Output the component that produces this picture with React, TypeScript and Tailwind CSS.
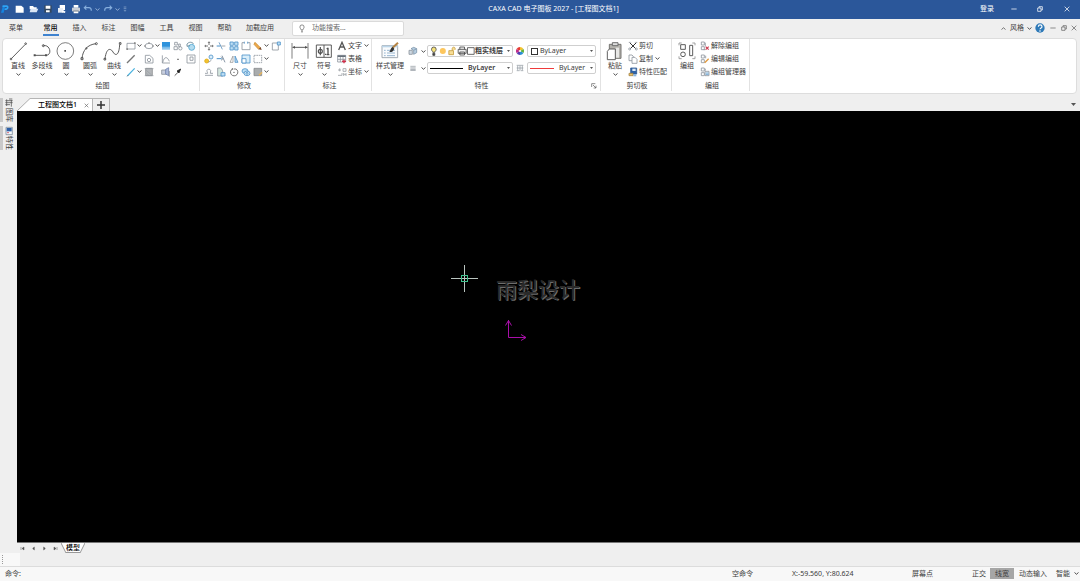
import type { ReactNode } from "react";

const BLUE = "#4a90c8";

function Chevron({ up = false, className = "" }: { up?: boolean; className?: string }) {
  return (
    <svg viewBox="0 0 10 6" className={`h-[3px] w-[5px] shrink-0 ${className}`} fill="none" stroke="currentColor" strokeWidth="1.8" aria-hidden="true">
      <path d={up ? "M1 5L5 1.5L9 5" : "M1 1L5 4.5L9 1"} />
    </svg>
  );
}

function Ico({ children }: { children: ReactNode }) {
  return (
    <svg viewBox="0 0 30 30" className="h-[10px] w-[10px] shrink-0" fill="none" stroke="#8a929a" strokeWidth="2.4" aria-hidden="true">
      {children}
    </svg>
  );
}

function Tool({ name, menu = false, children }: { name: string; menu?: boolean; children: ReactNode }) {
  return (
    <button type="button" aria-label={name} className="flex h-[13px] items-center gap-px hover:bg-sky-50">
      <Ico>{children}</Ico>
      {menu && <Chevron />}
    </button>
  );
}

function BigTool({ label, menu = true, wide = false, children }: { label: string; menu?: boolean; wide?: boolean; children: ReactNode }) {
  return (
    <button type="button" className={`flex flex-col items-center pt-[2px] hover:bg-sky-50 ${wide ? "w-[33px]" : "w-[24px]"}`}>
      <svg viewBox="0 0 72 60" className="h-[20px] w-[24px]" fill="none" stroke="#505050" strokeWidth="2.8" aria-hidden="true">
        {children}
      </svg>
      <span className="h-[10px] whitespace-nowrap leading-[10px]">{label}</span>
      {menu && <Chevron className="mt-[2px]" />}
    </button>
  );
}

function TextTool({ label, menu = false, children }: { label: string; menu?: boolean; children: ReactNode }) {
  return (
    <button type="button" className="flex h-[13px] items-center gap-px whitespace-nowrap leading-[13px] hover:bg-sky-50">
      <Ico>{children}</Ico>
      <span>{label}</span>
      {menu && <Chevron className="ml-px" />}
    </button>
  );
}

function Group({ title, launcher = false, className = "", children }: { title: string; launcher?: boolean; className?: string; children: ReactNode }) {
  return (
    <section aria-label={title} className="flex shrink-0 flex-col">
      <div className={`flex h-[52px] flex-col border-r border-[#e2e2e2] ${className}`}>
        <div className="flex flex-1">{children}</div>
        <div className="flex h-[10px] items-center">
          <span className="flex-1 text-center leading-[10px]">{title}</span>
          {launcher && (
            <button type="button" aria-label="特性设置" className="mr-[3px]">
              <svg viewBox="0 0 18 18" className="h-[6px] w-[6px]" fill="none" stroke="#555" strokeWidth="2">
                <path d="M2 12V2h11M6 6l9 9M15 8v7H8" />
              </svg>
            </button>
          )}
        </div>
      </div>
    </section>
  );
}

function Combo({ label, value, options, className = "", selectClass = "", children }: { label: string; value: string; options: string[]; className?: string; selectClass?: string; children: ReactNode }) {
  return (
    <label className={`flex h-[12px] items-center rounded-[2px] border border-[#cfcfcf] bg-white pl-[2px] pr-[2px] ${className}`}>
      {children}
      <select aria-label={label} defaultValue={value} className={`min-w-0 flex-1 appearance-none bg-transparent leading-[10px] outline-none ${selectClass}`}>
        {options.map((o) => (
          <option key={o}>{o}</option>
        ))}
      </select>
      <svg viewBox="0 0 9 6" className="h-[2px] w-[3px] shrink-0" fill="#555" aria-hidden="true">
        <path d="M0 0h9L4.500 6z" />
      </svg>
    </label>
  );
}

function TitleBar() {
  const quick: { name: string; art: ReactNode }[] = [
    { name: "新建", art: <path d="M2 5h17l7 6v15H2z" fill="#fff" /> },
    { name: "打开", art: <><path d="M2 6h10l3 4h8v6H2z" fill="#fff" /><path d="M5 14h23l-5 11H2z" fill="#dbe6f5" /></> },
    { name: "保存", art: <><path d="M4 4h22v22H4z" fill="#33475f" /><path d="M8 5h14v9H8zM9 19h11v6H9z" fill="#fff" /></> },
    { name: "另存为", art: <><path d="M8 3h16v15H8z" fill="#fff" /><path d="M3 12h15v14H3z" fill="#e8eef7" /><path d="M14 25l4-7 8 5-3 4z" fill="#fff" /></> },
    { name: "打印", art: <><path d="M8 3h14v8H8zM8 19h14v9H8z" fill="#fff" /><path d="M3 11h24v11H3z" fill="#c9ced6" /><path d="M7 20h16v2H7z" fill="#4c5868" /></> },
  ];
  return (
    <header className="flex h-[19px] shrink-0 items-center bg-[#2b579a] pb-px text-white">
      <svg viewBox="0 0 30 30" className="h-[10px] w-[10px] shrink-0" aria-label="CAXA">
        <path d="M3 26L8 8l7 2-4 16z" fill="#1583e0" />
        <path d="M8 4h12c8 1 8 13-2 14h-5l2-5h3c4 0 4-4 0-4H7z" fill="#2ea3f5" />
      </svg>
      <nav aria-label="快速访问" className="ml-[3px] flex items-center text-[#9db6d8]">
        {quick.map((q) => (
          <button key={q.name} type="button" aria-label={q.name} className="flex w-[14px] justify-center">
            <svg viewBox="0 0 30 30" className="h-[10px] w-[10px]">{q.art}</svg>
          </button>
        ))}
        <button type="button" aria-label="撤消" className="flex w-[17px] items-center justify-between">
          <svg viewBox="0 0 30 30" className="h-[10px] w-[10px]" fill="none" stroke="#86aedd" strokeWidth="3.500">
            <path d="M10 5L4 11l6 6M5 11h13c5 0 7 4 7 9" />
          </svg>
          <Chevron />
        </button>
        <button type="button" aria-label="重做" className="ml-[3px] flex w-[17px] items-center justify-between">
          <svg viewBox="0 0 30 30" className="h-[10px] w-[10px]" fill="none" stroke="#86aedd" strokeWidth="3.500">
            <path d="M20 5l6 6-6 6M25 11H12c-5 0-7 4-7 9" />
          </svg>
          <Chevron />
        </button>
        <button type="button" aria-label="自定义快速访问" className="ml-[3px]">
          <svg viewBox="0 0 12 18" className="h-[6px] w-[4px]" fill="none" stroke="#7f9dc6" strokeWidth="2.5">
            <path d="M2 3h8M2 8h8M3 12l3 4 3-4" />
          </svg>
        </button>
      </nav>
      <h1 className="flex-1 text-center text-[7px]">CAXA CAD 电子图板 2027 - [工程图文档1]</h1>
      <a href="#login" className="w-[21px]">登录</a>
      <div className="flex">
        <button type="button" aria-label="最小化" className="flex w-[26px] justify-center"><WinIcon kind="min" /></button>
        <button type="button" aria-label="还原" className="flex w-[26px] justify-center"><WinIcon kind="restore" /></button>
        <button type="button" aria-label="关闭" className="flex w-[27px] justify-center"><WinIcon kind="close" /></button>
      </div>
    </header>
  );
}

function WinIcon({ kind }: { kind: "min" | "restore" | "close" }) {
  return (
    <svg viewBox="0 0 18 18" className="h-[6px] w-[6px]" fill="none" stroke="currentColor" strokeWidth="2.2" aria-hidden="true">
      {kind === "min" && <path d="M1 9h16" />}
      {kind === "restore" && <path d="M2 6h10v10H2zM6 6V2h10v10h-4" />}
      {kind === "close" && <path d="M2 2l14 14M16 2L2 16" />}
    </svg>
  );
}

function MenuTabs() {
  const tabs = ["常用", "插入", "标注", "图幅", "工具", "视图", "帮助"];
  return (
    <div className="flex h-[19px] shrink-0 items-center pb-px">
      <button type="button" className="w-[32px] text-center">菜单</button>
      <nav className="ml-[4px] flex items-center">
        {tabs.map((t) => (
          <button key={t} type="button" className="flex w-[29px] justify-center">
            <span className={`h-[16px] border-b-2 px-px pt-[2px] leading-[11px] ${t === "常用" ? "border-[#3f83cf] font-medium text-black" : "border-transparent"}`}>{t}</span>
          </button>
        ))}
        <button type="button" className="w-[42px] text-center">加载应用</button>
      </nav>
      <label className="ml-[11px] flex h-[15px] w-[112px] items-center rounded-[2px] border border-[#dadada] bg-white pl-[5px]">
        <svg viewBox="0 0 24 30" className="h-[9px] w-[8px]" fill="none" stroke="#555" strokeWidth="2.200" aria-hidden="true">
          <path d="M9 20c0-4-4-5-4-10a7 7 0 0 1 14 0c0 5-4 6-4 10zM9 24h6M10 27h4" />
        </svg>
        <input aria-label="功能搜索" placeholder="功能搜索..." className="ml-[6px] min-w-0 flex-1 bg-transparent outline-none placeholder:text-[#666]" />
      </label>
      <div className="ml-auto flex items-center text-[#666]">
        <button type="button" aria-label="折叠功能区" className="mr-[4px]"><Chevron up /></button>
        <button type="button" className="flex items-center gap-[3px] text-[#444]">风格<Chevron /></button>
        <button type="button" aria-label="帮助" className="ml-[3px]">
          <svg viewBox="0 0 30 30" className="h-[10px] w-[10px]">
            <circle cx="15" cy="15" r="14" fill="#2f7ab8" />
            <path d="M10 11c0-7 11-7 11 0 0 4-6 4-6 8M15 22v4" fill="none" stroke="#fff" strokeWidth="3.500" />
          </svg>
        </button>
        <button type="button" aria-label="最小化文档" className="ml-[5px]"><WinIcon kind="min" /></button>
        <button type="button" aria-label="还原文档" className="ml-[5px]"><WinIcon kind="restore" /></button>
        <button type="button" aria-label="关闭文档" className="ml-[4px] mr-[3px]"><WinIcon kind="close" /></button>
      </div>
    </div>
  );
}

function DrawGroup() {
  return (
    <Group title="绘图" className="w-[197px] pl-[3px]">
      <BigTool label="直线"><path d="M16 53L58 10" /><circle cx="15" cy="54" r="2.500" /><circle cx="59" cy="8" r="2.500" /></BigTool>
      <BigTool label="多段线"><path d="M15 43h34M40 14c20-4 27 26 10 29" /><path d="M11 40h6v6h-6zM45 40h6v6h-6z" fill="#505050" stroke="none" /><circle cx="40" cy="14" r="3" /></BigTool>
      <BigTool label="圆"><circle cx="34" cy="30" r="25" strokeWidth="2.200" /><path d="M31 27h5v5h-5z" fill="#505050" stroke="none" /></BigTool>
      <BigTool label="圆弧"><path d="M12 53C14 28 28 11 54 8" /><path d="M9 50h6v6H9z" /><circle cx="55" cy="8" r="3" /><circle cx="25" cy="22" r="2" /></BigTool>
      <BigTool label="曲线"><path d="M9 54C13 18 27 22 33 33s18 14 20-22" /><path d="M6 52h5v5H6zM52 5h5v5h-5z" /></BigTool>
      <div className="grid grid-cols-[18px_17px_12px_13px_12px] content-start">
        <Tool name="矩形" menu><path d="M3 7h24v17H3z" /><path d="M1 22h5v5H1zM24 4h5v5h-5z" fill="#888" stroke="none" /></Tool>
        <Tool name="椭圆" menu><ellipse cx="15" cy="15" rx="12" ry="8" /><path d="M13 4h4v4h-4zM1 13h4v4H1zM25 13h4v4h-4z" fill="#888" stroke="none" /></Tool>
        <Tool name="渐变填充"><path d="M3 3h24v24H3z" fill="#2f93dc" stroke="none" /><path d="M3 17h24v5H3z" fill="#7cbdea" stroke="none" /><path d="M3 22h24v5H3z" fill="#b5d9f2" stroke="none" /></Tool>
        <Tool name="块"><path d="M5 4h8v8H5zM3 17h10v9H3zM17 9h5v8h-5z" /><circle cx="22" cy="22" r="5" /></Tool>
        <Tool name="三维"><circle cx="17" cy="19" r="9" fill="#b4dcf0" stroke="#4ba3cf" /><path d="M3 9c6-7 15-7 20 0M3 9v7l8-2" stroke="#55788c" /></Tool>

        <Tool name="构造线"><path d="M3 27L26 4" stroke="#777" strokeWidth="4" /></Tool>
        <Tool name="区域"><path d="M4 4h13l10 9v14H4z" /><circle cx="15" cy="18" r="5" /></Tool>
        <Tool name="函数曲线"><path d="M4 4v23h23M5 26C10 4 20 9 25 22" /></Tool>
        <Tool name="点"><path d="M13 14h4v4h-4z" fill="#555" stroke="none" /></Tool>
        <Tool name="孔"><path d="M3 3h24v24H3z" /><path d="M12 9h9v10h-9z" /></Tool>

        <Tool name="射线" menu><path d="M4 27L26 4" stroke="#48b1de" strokeWidth="3.500" /><path d="M3 28l4-4" stroke="#777" /></Tool>
        <Tool name="填充"><path d="M5 4h20v22H5z" fill="#b4b7ba" stroke="#8b8e92" /><path d="M2 5h27M2 26h27M7 10l16 14M7 18l8 8" strokeWidth="1.500" /></Tool>
        <Tool name="文字块"><path d="M2 9h14v13H2z" fill="#c7cede" /><path d="M14 7l9-5v24l-9-5z" fill="#a9b8d8" stroke="#6e80ad" /><path d="M25 12v17" /></Tool>
        <Tool name="箭头"><path d="M5 26L16 15" stroke="#333" /><path d="M23 6L12 12l6 6z" fill="#222" stroke="#222" /></Tool>
      </div>
    </Group>
  );
}

function ModifyGroup() {
  return (
    <Group title="修改" className="w-[85px] pl-[4px]">
      <div className="grid grid-cols-[12px_13px_12px_12px_18px_12px] content-start">
        <Tool name="移动"><path d="M15 3v9M15 18v9M3 15h9M18 15h9" stroke="#555" /><path d="M12 6l3-4 3 4M12 24l3 4 3-4M6 12l-4 3 4 3M24 12l4 3-4 3" stroke="#555" strokeWidth="2" /></Tool>
        <Tool name="裁剪"><path d="M2 15h11" stroke="#4a90c8" strokeWidth="3" /><path d="M16 15h12" /><path d="M9 4l10 21" stroke="#5a8fbb" /></Tool>
        <Tool name="阵列"><path d="M3 3h10v10H3zM17 3h10v10H17zM3 17h10v10H3zM17 17h10v10H17z" fill="#bfe0f5" stroke={BLUE} /></Tool>
        <Tool name="打断"><path d="M10 5H3v21h24V5h-7" /><path d="M10 2v6M20 2v6" stroke={BLUE} /></Tool>
        <Tool name="删除" menu><path d="M6 4l16 16-5 5L3 10z" fill="#efa94c" stroke="#c98b2e" /><path d="M17 25l9 2-3-9z" fill="#7c4a2b" stroke="none" /></Tool>
        <Tool name="拉伸"><path d="M4 6h18v21H4z" /><path d="M19 3h9v9h-9z" fill="#bfe0f5" stroke={BLUE} /></Tool>

        <Tool name="平移复制"><circle cx="8" cy="21" r="6" fill="#f2c230" stroke="#e0ab16" /><circle cx="21" cy="9" r="6" stroke={BLUE} fill="#dceefa" /><path d="M13 25l9-6" /></Tool>
        <Tool name="延伸"><path d="M2 14h15" stroke={BLUE} strokeWidth="3" /><path d="M15 8l6 6-6 5M18 5l9 20" stroke="#6a7c90" /></Tool>
        <Tool name="镜像"><path d="M12 6v19H3z" stroke="#999" /><path d="M18 6v19h9z" fill="#b7d5ec" stroke={BLUE} /></Tool>
        <Tool name="缩放"><path d="M3 3h24v24H3z" fill="#d9eefa" stroke={BLUE} /><path d="M3 14h12v13H3z" fill="#fff" stroke={BLUE} /></Tool>
        <Tool name="分解" menu><path d="M3 4h23v22H3z" strokeDasharray="5 2" /></Tool>
        <span />

        <Tool name="偏移"><path d="M3 25h24M3 19h8c0-4-3-5-2-9s9-5 11 0c1 4-2 5-1 9h8" /></Tool>
        <Tool name="圆角"><path d="M5 3h9c6 3 7 12 7 24H5z" fill="#d4e7df" /><path d="M15 17h12v10H15z" fill="#bfe0f5" stroke={BLUE} /></Tool>
        <Tool name="旋转"><path d="M10 6a11 11 0 1 0 11 0M21 6h-7M10 3v6" stroke="#555" /><circle cx="15" cy="16" r="2" fill="#555" stroke="none" /></Tool>
        <Tool name="组合"><ellipse cx="12" cy="12" rx="9" ry="7" stroke={BLUE} fill="#bfe0f5" /><ellipse cx="18" cy="19" rx="9" ry="7" stroke={BLUE} fill="#d7ecf8" /><circle cx="18" cy="19" r="3" stroke={BLUE} /></Tool>
        <Tool name="填充编辑" menu><path d="M3 4h23v22H3z" fill="#a9acad" stroke="#85898c" /><path d="M27 16L18 25" stroke="#e7b45b" strokeWidth="4" /></Tool>
      </div>
    </Group>
  );
}

function AnnotateGroup() {
  return (
    <Group title="标注" className="w-[87px] pl-[3px]">
      <BigTool label="尺寸"><path d="M12 6v47M60 6v47" strokeWidth="2.200" /><path d="M14 19h44" /><path d="M13 19l8-4v8zM59 19l-8-4v8z" fill="#505050" stroke="none" /></BigTool>
      <BigTool label="符号">
        <path d="M13 12h45v37H13zM36 12v37" />
        <path d="M25 18v25" strokeWidth="3.500" /><circle cx="25" cy="31" r="6" strokeWidth="3.500" />
        <path d="M48 20v21M44 24l4-3M44 41h8" strokeWidth="4" /><path d="M39 38h4v4h-4z" fill="#505050" stroke="none" />
      </BigTool>
      <div className="ml-px">
        <TextTool label="文字" menu><path d="M5 27L15 4l10 23M9 18h12" stroke="#555" strokeWidth="4" /></TextTool>
        <TextTool label="表格"><path d="M2 4h24v20H2z" /><path d="M2 4h24v5H2z" fill="#66707a" stroke="none" /><path d="M2 16h24M10 9v15M18 9v15" /><path d="M21 17v11M15 22h12" stroke="#d22f4a" strokeWidth="4" /></TextTool>
        <TextTool label="坐标" menu><path d="M3 9h9M8 4v9M18 5h9v8h-9zM3 25h12v-7M20 18v9M27 18v9M20 22h7" stroke="#9a9fa5" /></TextTool>
      </div>
    </Group>
  );
}

function PropertyGroup() {
  const byLayer = ["ByLayer", "ByBlock"];
  return (
    <Group title="特性" launcher className="w-[229px]">
      <div className="flex w-[36px] justify-center">
        <BigTool label="样式管理" wide>
          <path d="M12 14h47v36H12z" stroke="#9aa3ab" fill="#f9fbfd" /><path d="M12 14h47v5H12z" fill="#bcd6ea" stroke="none" />
          <path d="M18 28h5M27 28h24M18 36h5M27 36h24M18 44h5M27 44h24" stroke="#8fb0cc" />
          <path d="M60 5L43 21" stroke="#b58445" strokeWidth="6" /><path d="M44 18l5 5c-3 9-9 11-15 10 4-5 3-12 10-15z" fill="#333" stroke="none" />
        </BigTool>
      </div>
      <div className="flex flex-1 flex-col gap-[5px] pt-[6px] pr-[4px]">
        <div className="flex items-center">
          <button type="button" aria-label="图层" className="flex w-[19px] items-center gap-[3px]">
            <Ico><path d="M3 13h10v12H3z" fill="#cdd8e2" /><path d="M9 8l8-4 9 4-9 5zM17 13v12l9-5V8" fill="#b8cfe2" stroke="#7b93a8" /></Ico><Chevron />
          </button>
          <Combo label="图层" value="粗实线层" options={["粗实线层", "细实线层", "中心线层"]} className="w-[86px]" selectClass="font-bold">
            <svg viewBox="0 0 134 30" className="h-[10px] w-[45px] shrink-0" fill="none" stroke="#444" strokeWidth="2.400" aria-hidden="true">
              <path d="M8 19c0-4-4-4-4-9a7 7 0 0 1 14 0c0 5-4 5-4 9z" fill="#f6e27a" /><path d="M8 22h6v6H8z" fill="#444" />
              <circle cx="38" cy="15" r="9" fill="#fdc65d" stroke="none" />
              <path d="M56 14h14v12H56zM66 14V8c0-6 9-6 9 0v3" stroke="#c49a3b" fill="#f7dd96" />
              <path d="M84 10h24v12H84zM89 10V3h14v7M89 18h14v9H89z" fill="#eee" />
              <path d="M112 5h20v20h-20z" fill="#fff" />
            </svg>
          </Combo>
          <button type="button" aria-label="颜色" className="mx-[2px] flex w-[10px] justify-center">
            <svg viewBox="0 0 24 24" className="h-[8px] w-[8px]">
              <path d="M12 12V0a12 12 0 0 1 10.400 6z" fill="#f4c32c" /><path d="M12 12L22.400 6a12 12 0 0 1 0 12z" fill="#62b33c" />
              <path d="M12 12l10.400 6A12 12 0 0 1 12 24z" fill="#2a8fd5" /><path d="M12 12v12A12 12 0 0 1 1.600 18z" fill="#5540b0" />
              <path d="M12 12L1.600 18a12 12 0 0 1 0-12z" fill="#c02c8b" /><path d="M12 12L1.600 6A12 12 0 0 1 12 0z" fill="#e63a31" />
              <circle cx="12" cy="12" r="3" fill="#fff" />
            </svg>
          </button>
          <Combo label="颜色" value="ByLayer" options={byLayer} className="flex-1" selectClass="pl-[2px]">
            <span className="ml-px h-[7px] w-[7px] shrink-0 border border-[#333]" />
          </Combo>
        </div>
        <div className="flex items-center">
          <button type="button" aria-label="线宽" className="flex w-[19px] items-center gap-[3px]">
            <Ico><path d="M7 10h16" strokeWidth="2" /><path d="M7 15h16" strokeWidth="2.500" /><path d="M7 21h16" strokeWidth="4" /></Ico><Chevron />
          </button>
          <Combo label="线型" value="ByLayer" options={byLayer} className="w-[86px]" selectClass="pl-[5px] font-semibold">
            <span className="h-px w-[33px] shrink-0 bg-black" />
          </Combo>
          <button type="button" aria-label="线宽设置" className="mx-[2px] flex w-[10px] justify-center">
            <Ico><path d="M5 7h20M5 15h20M5 23h9M17 23h8M8 8v14M22 8v14M15 8v14" strokeWidth="2" /></Ico>
          </button>
          <Combo label="线宽" value="ByLayer" options={byLayer} className="flex-1" selectClass="pl-[5px]">
            <span className="h-px w-[24px] shrink-0 bg-[#ef3b3b]" />
          </Combo>
        </div>
      </div>
    </Group>
  );
}

function ClipboardGroup() {
  return (
    <Group title="剪切板" className="w-[71px] pl-[2px]">
      <BigTool label="粘贴">
        <path d="M19 10h35v42H19z" fill="#b5b3ae" stroke="#6f6d69" /><path d="M28 5h17v9H28z" fill="#ddd" stroke="#666" />
        <path d="M38 20h10v30H38z" fill="#e8e8e6" stroke="none" /><path d="M19 24h18v32H13V31z" fill="#fff" stroke="#555" />
      </BigTool>
      <div className="ml-px">
        <TextTool label="剪切"><path d="M5 5l18 18M25 5L7 23" stroke="#333" strokeWidth="3" /><circle cx="5" cy="24" r="3" /><circle cx="25" cy="24" r="3" /><path d="M2 4h8M20 4h8" strokeWidth="1.500" /></TextTool>
        <TextTool label="复制" menu><path d="M3 3h9l4 4v13H3z" /><path d="M12 10h9l6 6v12H12z" fill="#fff" /></TextTool>
        <TextTool label="特性匹配"><path d="M8 3h18v18H8z" fill="#2f62a6" stroke="#315c93" /><path d="M13 5h10v7H13z" fill="#dbe8f5" stroke="none" /><path d="M3 19h12v7H3z" fill="#e8c26a" stroke="#a38240" /><path d="M16 22h9v6h-9z" fill="#8ab6e0" stroke="none" /></TextTool>
      </div>
    </Group>
  );
}

function CombineGroup() {
  return (
    <Group title="编组" className="w-[78px] pl-[3px]">
      <BigTool label="编组" menu={false}>
        <path d="M17 11h14v14H17zM44 13h9v31h-9z" /><circle cx="24" cy="40" r="7" />
        <path d="M12 6h8M12 6v7M60 6h-8M60 6v7M12 53h8M12 53v-7M60 53h-8M60 53v-7" stroke="#999" />
      </BigTool>
      <div className="ml-px">
        <TextTool label="解除编组"><path d="M4 3h9v9H4zM4 17h9v9H4zM16 5v11M16 26h-5" /><path d="M17 17l9 9M26 17l-9 9" stroke="#cc3b50" strokeWidth="3.500" /></TextTool>
        <TextTool label="编辑编组"><path d="M4 3h9v9H4zM4 17h9v9H4zM17 5v8" /><path d="M14 26L26 14" stroke="#e09a3e" strokeWidth="4" /></TextTool>
        <TextTool label="编组管理器"><path d="M4 3h9v9H4zM4 17h9v9H4zM16 5v6M15 13h12v13H15z" /><path d="M17 18h9M17 22h9" stroke={BLUE} /></TextTool>
      </div>
    </Group>
  );
}

function SideTab({ label, children }: { label: string; children: ReactNode }) {
  return (
    <button type="button" className="flex h-[24px] items-stretch">
      <span className="w-[3px] bg-[#c9c9c9]" />
      <span className="flex flex-col items-center pl-px">
        <Ico>{children}</Ico>
        <span className="leading-[10px] [text-orientation:sideways] [writing-mode:vertical-rl]">{label}</span>
      </span>
    </button>
  );
}

function DocumentTabs() {
  return (
    <div className="flex h-[17px] shrink-0 items-end pr-[4px]">
      <div className="flex h-[13px] items-center">
        <svg viewBox="0 0 13 13" className="h-[13px] w-[13px]" aria-hidden="true">
          <path d="M0 13L13 0v13z" fill="#fff" /><path d="M0 13L13 .500" stroke="#aaa" fill="none" />
        </svg>
        <div className="flex h-[13px] items-center border-t border-r border-[#b5b5b5] bg-white pl-[8px] pr-[3px]">
          <button type="button" className="font-medium text-black">工程图文档1</button>
          <button type="button" aria-label="关闭文档" className="ml-[7px]">
            <svg viewBox="0 0 15 15" className="h-[5px] w-[5px]" stroke="#666" strokeWidth="2"><path d="M2 2l11 11M13 2L2 13" /></svg>
          </button>
        </div>
        <button type="button" aria-label="新建文档" className="flex h-[13px] w-[17px] items-center justify-center border-t border-r border-[#b5b5b5]">
          <svg viewBox="0 0 24 24" className="h-[8px] w-[8px]" stroke="#333" strokeWidth="4.500"><path d="M12 0v24M0 12h24" /></svg>
        </button>
      </div>
      <button type="button" aria-label="文档列表" className="mb-[5px] ml-auto">
        <svg viewBox="0 0 10 6" className="h-[3px] w-[5px]" fill="#555"><path d="M0 0h10L5 6z" /></svg>
      </button>
    </div>
  );
}

function DrawingCanvas() {
  return (
    <div className="relative min-h-0 flex-1 overflow-hidden border-b border-[#777] bg-black">
      <svg viewBox="0 0 28 28" className="absolute top-[154px] left-[434px] h-[28px] w-[28px]" fill="none" shapeRendering="crispEdges" aria-hidden="true">
        <path d="M0 13.500H27M13.500 0V27" stroke="#b9c4bf" /><path d="M10.500 10.500h6v6h-6z" stroke="#3fc08d" />
      </svg>
      <p className="absolute top-[165px] left-[479px] text-[21px] leading-[26px] font-medium text-[#2a2a2a] [text-shadow:1px_1px_0_#6c6c6c]">雨梨设计</p>
      <svg viewBox="0 0 22 22" className="absolute top-[208px] left-[488px] h-[22px] w-[22px]" fill="none" stroke="#a80fa8" aria-hidden="true">
        <path d="M3.500 1v17.500H21M.500 6.500l3-5 3 5M16 15.500l5 3-5 3" />
      </svg>
    </div>
  );
}

function ModelTabs() {
  const moves = [
    { name: "第一页", d: "M3 3v9M12 3L6 7.500l6 4.500z" },
    { name: "上一页", d: "M10 3L5 7.500l5 4.500z" },
    { name: "下一页", d: "M5 3l5 4.500L5 12z" },
    { name: "最后一页", d: "M12 3v9M3 3l6 4.500L3 12z" },
  ];
  return (
    <div className="flex h-[10px] shrink-0 items-center">
      {moves.map((m) => (
        <button key={m.name} type="button" aria-label={m.name} className="flex w-[11px] justify-center">
          <svg viewBox="0 0 15 15" className="h-[5px] w-[5px]" fill="#555" stroke="#555" strokeWidth="1.500"><path d={m.d} /></svg>
        </button>
      ))}
      <button type="button" className="flex h-[10px] items-center font-medium text-black">
        <svg viewBox="0 0 5 10" className="h-[10px] w-[5px]"><path d="M0 0h5v10z" fill="#fff" /><path d="M0 0l5 10" stroke="#999" /></svg>
        <span className="h-[10px] border-b border-[#999] bg-white leading-[10px]">模型</span>
        <svg viewBox="0 0 5 10" className="h-[10px] w-[5px]"><path d="M0 0h5L0 10z" fill="#fff" /><path d="M5 0L0 10" stroke="#999" /></svg>
      </button>
    </div>
  );
}

function StatusBar() {
  return (
    <footer className="flex h-[15px] shrink-0 items-center border-t border-[#dcdcdc] bg-[#f8f8f8] pb-px pl-[5px] pr-[1px]">
      <span className="flex-1">命令:</span>
      <span className="w-[60px]">空命令</span>
      <span className="w-[120px]">X:-59.560, Y:80.624</span>
      <span className="w-[60px]">屏幕点</span>
      <button type="button" className="w-[18px] text-left">正交</button>
      <button type="button" className="h-[11px] w-[24px] bg-[#a6a6a6] leading-[11px]">线宽</button>
      <button type="button" className="ml-[5px] w-[37px] text-left">动态输入</button>
      <button type="button" className="flex items-center gap-[4px]">智能<Chevron /></button>
    </footer>
  );
}

export default function App() {
  return (
    <div className="flex h-screen min-w-[760px] flex-col overflow-hidden bg-[#efefef] font-['Noto_Sans','Noto_Sans_CJK_SC',sans-serif] text-[7px] leading-[10px] text-[#3c3c3c]">
      <TitleBar />
      <MenuTabs />
      <div className="mr-[3px] ml-[2px] flex h-[56px] shrink-0 rounded-[4px] border border-[#dddddd] bg-white">
        <DrawGroup />
        <ModifyGroup />
        <AnnotateGroup />
        <PropertyGroup />
        <ClipboardGroup />
        <CombineGroup />
      </div>
      <div className="flex min-h-0 flex-1">
        <aside className="flex w-[17px] shrink-0 flex-col gap-[4px] pt-[4px]">
          <SideTab label="图库"><path d="M4 8h22M4 14h22M4 20h14M8 4v20M22 6v20M15 3h10" stroke="#555" /></SideTab>
          <SideTab label="特性"><path d="M6 4h19v22H6z" fill="#f4f7fa" stroke="#7b8a99" /><path d="M8 6h15v10H8z" fill="#2d5fa6" stroke="none" /><path d="M9 20h6" stroke="#cc4455" /></SideTab>
        </aside>
        <main className="flex min-w-0 flex-1 flex-col">
          <DocumentTabs />
          <DrawingCanvas />
          <ModelTabs />
        </main>
      </div>
      <div className="flex h-[13px] shrink-0">
        <div className="flex w-[20px] items-center bg-[#f8f8f8] pl-[2px]">
          <span className="h-[9px] border-l border-dotted border-[#999]" />
        </div>
      </div>
      <StatusBar />
    </div>
  );
}
